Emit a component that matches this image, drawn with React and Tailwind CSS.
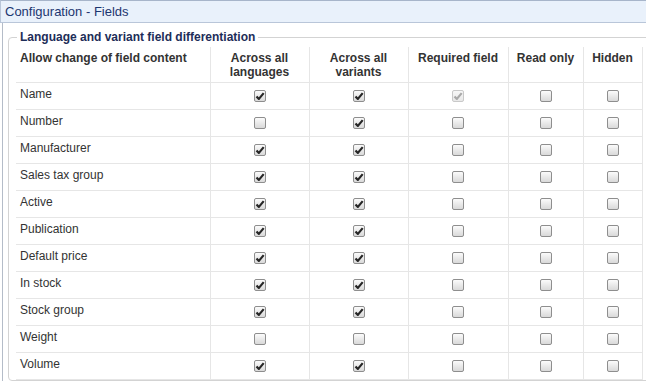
import React from 'react'

// Configuration - Fields panel: language/variant differentiation table

const rows = [
  { name: 'Name', lang: true, variant: true, required: 'disabled' },
  { name: 'Number', lang: false, variant: true },
  { name: 'Manufacturer', lang: true, variant: true },
  { name: 'Sales tax group', lang: true, variant: true },
  { name: 'Active', lang: true, variant: true },
  { name: 'Publication', lang: true, variant: true },
  { name: 'Default price', lang: true, variant: true },
  { name: 'In stock', lang: true, variant: true },
  { name: 'Stock group', lang: true, variant: true },
  { name: 'Weight', lang: false, variant: false },
  { name: 'Volume', lang: true, variant: true },
]

function Checkbox({ checked, disabled }) {
  return (
    <span
      className={
        'inline-flex w-[12px] h-[12px] items-center justify-center rounded-[2px] border align-middle ' +
        (disabled
          ? 'border-[#c9c9c9] bg-gradient-to-b from-[#f7f7f7] to-[#e8e8e8]'
          : 'border-[#8e8e8e] bg-gradient-to-b from-[#fbfbfb] to-[#d9d9d9]')
      }
    >
      {checked && (
        <svg width="10" height="10" viewBox="0 0 10 10">
          <path
            d="M1.5 5.4 L3.9 7.9 L8.7 2.1"
            fill="none"
            stroke={disabled ? '#a9a9a9' : '#262626'}
            strokeWidth="2.2"
            strokeLinejoin="round"
          />
        </svg>
      )}
    </span>
  )
}

export default function App() {
  return (
    <div className="w-[646px] h-[381px] overflow-hidden bg-white font-['Liberation_Sans',Arial,sans-serif] text-[12px] text-[#333]">
      <div className="w-[700px]">
        {/* Title bar */}
        <div className="h-[23px] border-t border-b border-l border-t-[#a7b5ca] border-b-[#b9c6d9] border-l-[#b9c6d9] bg-[#e9f1fb] pl-[4px] flex items-center">
          <span className="text-[13px] leading-[16px] text-[#1c3670]">Configuration - Fields</span>
        </div>

        <div className="ml-[2px] border-l border-[#b4bcc8] pl-[5px] pt-[7px]">
          <fieldset className="border border-[#d3d3d3] rounded-[4px] pl-[7px] pt-0 pb-0 m-0">
            <legend className="ml-[1px] px-[3px] text-[12px] leading-[14px] font-bold text-[#1d2d58]">
              Language and variant field differentiation
            </legend>
            <table className="table-fixed border-collapse w-[626px] mt-[3px]">
              <colgroup>
                <col className="w-[194px]" />
                <col className="w-[99px]" />
                <col className="w-[99px]" />
                <col className="w-[100px]" />
                <col className="w-[75px]" />
                <col className="w-[59px]" />
              </colgroup>
              <thead>
                <tr className="h-[35px] border-b border-[#e6e6e6] font-bold text-[12px] leading-[14px] text-[#333]">
                  <th className="text-left align-top pl-[4px] pt-[4px] font-bold">Allow change of field content</th>
                  <th className="align-top pt-[4px] border-l border-[#e6e6e6] font-bold">Across all<br />languages</th>
                  <th className="align-top pt-[4px] border-l border-[#e6e6e6] font-bold">Across all<br />variants</th>
                  <th className="align-top pt-[4px] border-l border-[#e6e6e6] font-bold">Required field</th>
                  <th className="align-top pt-[4px] border-l border-[#e6e6e6] font-bold">Read only</th>
                  <th className="align-top pt-[4px] border-l border-r border-[#e6e6e6] font-bold">Hidden</th>
                </tr>
              </thead>
              <tbody>
                {rows.map((r) => (
                  <tr key={r.name} className="h-[27px] border-b border-[#e6e6e6]">
                    <td className="pl-[4px] align-top pt-[4px] leading-[14px]">{r.name}</td>
                    <td className="text-center border-l border-[#e6e6e6] p-0 leading-none">
                      <Checkbox checked={r.lang} />
                    </td>
                    <td className="text-center border-l border-[#e6e6e6] p-0 leading-none">
                      <Checkbox checked={r.variant} />
                    </td>
                    <td className="text-center border-l border-[#e6e6e6] p-0 leading-none">
                      <Checkbox checked={r.required === 'disabled'} disabled={r.required === 'disabled'} />
                    </td>
                    <td className="text-center border-l border-[#e6e6e6] p-0 leading-none">
                      <Checkbox checked={false} />
                    </td>
                    <td className="text-center border-l border-r border-[#e6e6e6] p-0 leading-none">
                      <Checkbox checked={false} />
                    </td>
                  </tr>
                ))}
              </tbody>
            </table>
          </fieldset>
        </div>
      </div>
    </div>
  )
}
